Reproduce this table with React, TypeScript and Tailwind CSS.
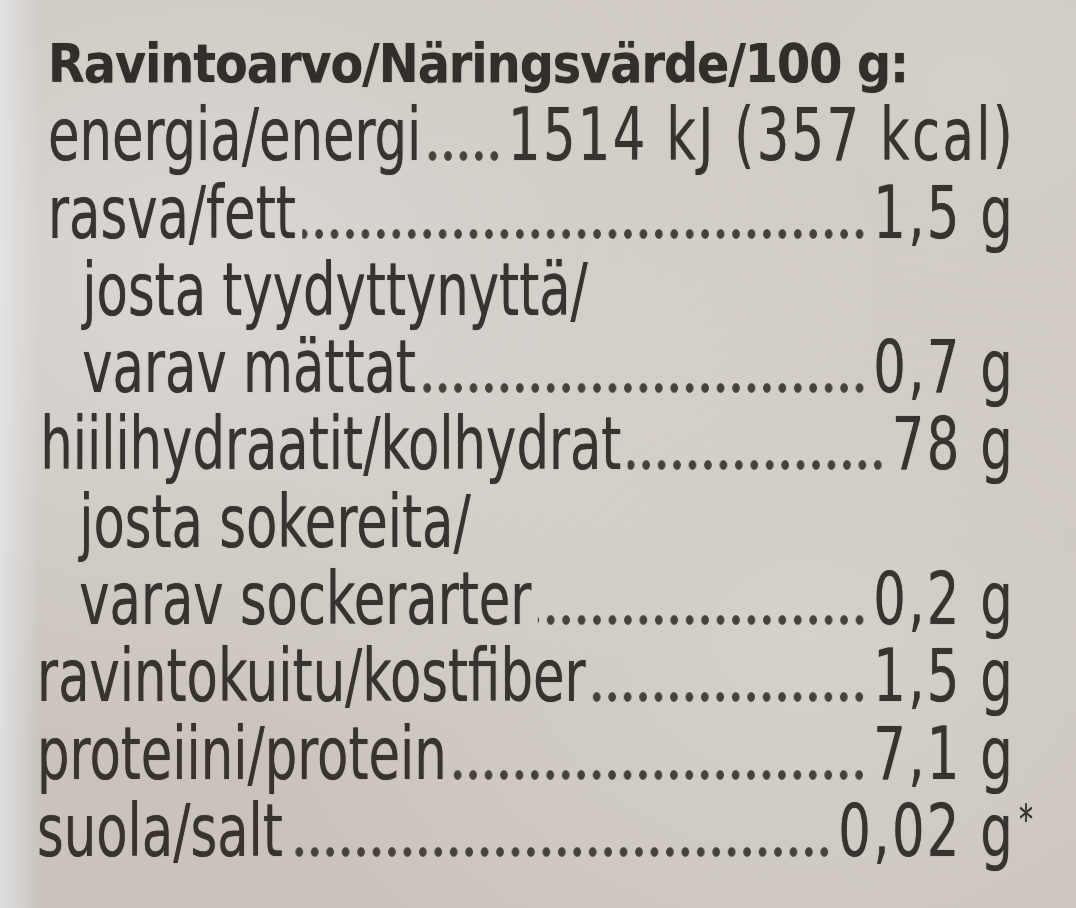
import React from "react";

type Row = {
  label: string;
  value?: string;
  indent?: boolean;
  star?: boolean;
  shift?: number;
};

const rows: Row[] = [
  { label: "energia/energi", value: "1514 kJ (357 kcal)" },
  { label: "rasva/fett", value: "1,5 g" },
  { label: "josta tyydyttynyttä/", indent: true },
  { label: "varav mättat", value: "0,7 g", indent: true },
  { label: "hiilihydraatit/kolhydrat", value: "78 g", shift: 1 },
  { label: "josta sokereita/", indent: true, shift: 1 },
  { label: "varav sockerarter", value: "0,2 g", indent: true, shift: 1 },
  { label: "ravintokuitu/kostfiber", value: "1,5 g", shift: 2 },
  { label: "proteiini/protein", value: "7,1 g", shift: 2 },
  { label: "suola/salt", value: "0,02 g", star: true, shift: 2 },
];

function Leader() {
  return (
    <span className="mx-[8px] mb-[11px] h-[12px] flex-1 self-end bg-[radial-gradient(circle_at_center,#47413c_0px,#47413c_4.3px,transparent_5.3px)] bg-[length:19.8px_12px] bg-[position:right_center] bg-repeat-x" />
  );
}

function rowPad(r: Row) {
  if (r.indent) return r.shift ? "pl-[40px]" : "pl-[44px]";
  if (r.shift === 1) return "-ml-[10px]";
  if (r.shift === 2) return "-ml-[14px]";
  return "";
}

export default function App() {
  return (
    <div className="relative h-[908px] w-[1076px] overflow-hidden bg-[#cac3bd] font-['Liberation_Sans_Narrow','DejaVu_Sans_Condensed',Roboto,sans-serif] text-[#38332e]">
      <div className="pointer-events-none absolute inset-0 bg-[radial-gradient(ellipse_at_20%_30%,rgba(235,232,230,0.55),transparent_55%),radial-gradient(ellipse_at_75%_70%,rgba(230,226,222,0.45),transparent_50%),radial-gradient(ellipse_at_90%_10%,rgba(225,220,215,0.5),transparent_40%),linear-gradient(90deg,rgba(225,228,232,0.85)_0px,rgba(225,228,232,0)_40px)]" />
      <div className="relative flex flex-col pl-[48px] pt-[34px] [text-shadow:0_0_1px_rgba(56,51,46,0.7)]">
        <div className="text-[53px] font-bold leading-[60px] tracking-[-1px] text-[#332e2a]">
          Ravintoarvo/Näringsvärde/100 g:
        </div>
        <div className="mt-[2px] flex w-[1240px] origin-top-left scale-x-[0.78] flex-col">
          {rows.map((r) => (
            <div
              key={r.label}
              className={`flex h-[77.3px] items-end text-[73px] leading-[77px] ${rowPad(r)}`}
            >
              <span className="whitespace-nowrap">{r.label}</span>
              {r.value && <Leader />}
              {r.value && (
                <span className="relative whitespace-nowrap tracking-[3px]">
                  {r.value}
                  {r.star && (
                    <span className="absolute -right-[26px] top-[8px] text-[40px] leading-none">*</span>
                  )}
                </span>
              )}
            </div>
          ))}
        </div>
      </div>
    </div>
  );
}
